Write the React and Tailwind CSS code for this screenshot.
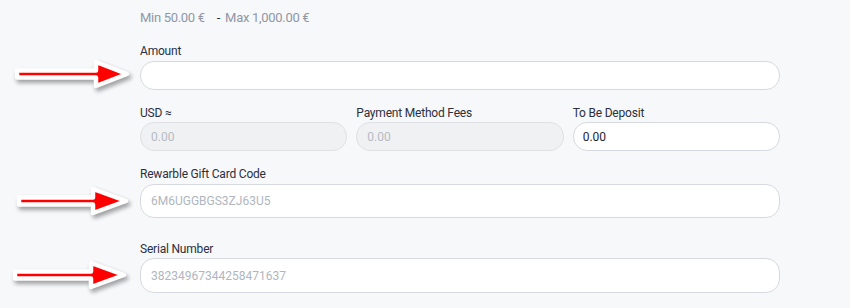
import React from "react";

const font = { fontFamily: 'Roboto, "Noto Sans", sans-serif' };

function Arrow({ x1, base, tip, y, half }) {
  const shaftH = 3.5;
  const pts = [
    [x1, y - shaftH],
    [base, y - shaftH],
    [base, y - half],
    [tip, y],
    [base, y + half],
    [base, y + shaftH],
    [x1, y + shaftH],
  ]
    .map((p) => p.join(","))
    .join(" ");
  return (
    <g>
      <polygon points={pts} fill="#000" opacity="0.35" transform="translate(2,3)" filter="url(#blur)" stroke="#000" strokeWidth="5" strokeLinejoin="round" />
      <polygon points={pts} fill="#ff0000" stroke="#ffffff" strokeWidth="4.5" strokeLinejoin="round" />
    </g>
  );
}

function Label({ children, className = "" }) {
  return (
    <div className={"text-[12px] leading-[16px] tracking-[-0.2px] text-[#2b3040] " + className}>{children}</div>
  );
}

export default function App() {
  return (
    <div className="relative w-[850px] h-[308px] bg-[#f7f8fa] overflow-hidden" style={font}>
      <div className="pl-[140px] w-[780px] pt-[10px] flex flex-col">
        <div className="text-[13px] leading-[16px] tracking-[-0.3px] text-[#8e97a8] flex">
          <span>Min 50.00 €</span>
          <span className="ml-[12px] text-[#2b3040]">-</span>
          <span className="ml-[5px]">Max 1,000.00 €</span>
        </div>

        <Label className="mt-[17px] mb-[2px]">Amount</Label>
        <div className="h-[29px] rounded-[14px] border border-[#d6d9df] bg-white" />

        <div className="mt-[15px] grid grid-cols-3 gap-x-[9px]">
          <div className="flex flex-col">
            <Label className="mb-[1px]">USD ≈</Label>
            <div className="h-[29px] rounded-[14px] border border-[#dfe1e5] bg-[#f0f1f3] flex items-center pl-[10px] text-[12px] text-[#b6bbc4]">
              0.00
            </div>
          </div>
          <div className="flex flex-col">
            <Label className="mb-[1px]">Payment Method Fees</Label>
            <div className="h-[29px] rounded-[14px] border border-[#dfe1e5] bg-[#f0f1f3] flex items-center pl-[10px] text-[12px] text-[#b6bbc4]">
              0.00
            </div>
          </div>
          <div className="flex flex-col">
            <Label className="mb-[1px]">To Be Deposit</Label>
            <div className="h-[29px] rounded-[14px] border border-[#d6d9df] bg-white flex items-center pl-[9px] text-[12px] text-[#1f2430]">
              0.00
            </div>
          </div>
        </div>

        <Label className="mt-[15px] mb-[2px]">Rewarble Gift Card Code</Label>
        <div className="h-[34px] rounded-[14px] border border-[#d6d9df] bg-white flex items-center pl-[10px] text-[12px] text-[#b0b6c0]">
          6M6UGGBGS3ZJ63U5
        </div>

        <Label className="mt-[23px] mb-[1px]">Serial Number</Label>
        <div className="h-[35px] rounded-[14px] border border-[#d6d9df] bg-white flex items-center pl-[10px] text-[12px] text-[#b0b6c0]">
          38234967344258471637
        </div>
      </div>

      <svg className="absolute left-0 top-0" width="850" height="308">
        <defs>
          <filter id="blur" x="-20%" y="-50%" width="140%" height="200%">
            <feGaussianBlur stdDeviation="2" />
          </filter>
        </defs>
        <Arrow x1={17} base={96} tip={127} y={74} half={12} />
        <Arrow x1={19} base={93} tip={126} y={201} half={12} />
        <Arrow x1={15} base={91} tip={124} y={275} half={12} />
      </svg>
    </div>
  );
}
